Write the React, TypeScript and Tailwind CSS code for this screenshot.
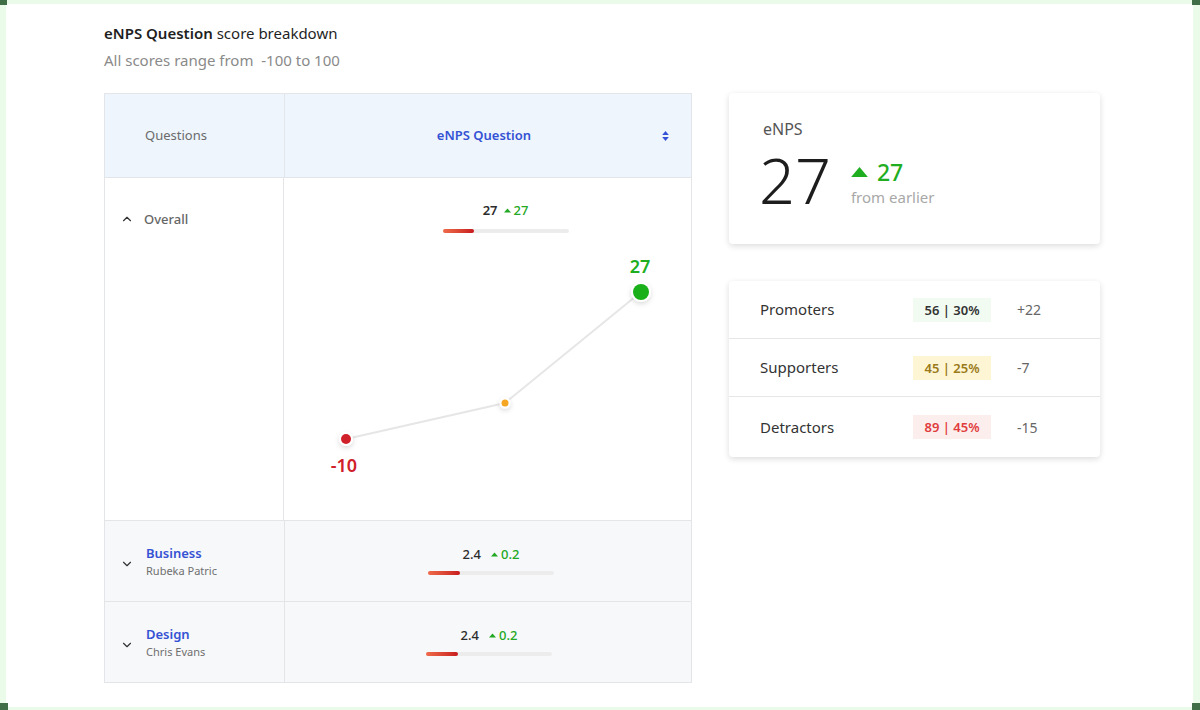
import { ChevronDown, ChevronUp } from 'lucide-react';

const font = { fontFamily: '"Noto Sans", "Open Sans", sans-serif' };

function UpTri({ className = '' }: { className?: string }) {
  return (
    <svg viewBox="0 0 10 6" className={className}>
      <path d="M5 0 L10 6 L0 6 Z" fill="currentColor" />
    </svg>
  );
}

function ScoreBar({ fill }: { fill: number }) {
  return (
    <div className="h-[4px] w-[126px] rounded-full bg-[#ececec]">
      <div
        className="h-full rounded-full bg-gradient-to-r from-[#ef6a4a] to-[#c8161e]"
        style={{ width: `${fill}%` }}
      />
    </div>
  );
}

function Score({ value, delta, big }: { value: string; delta: string; big?: boolean }) {
  return (
    <div className={`flex items-center text-[13px] leading-none ${big ? 'gap-[6px]' : 'gap-[10px]'}`}>
      <span className={`text-[#2b2b2b] ${big ? 'font-semibold' : 'font-medium'}`}>{value}</span>
      <span className="flex items-center gap-[3px] font-medium text-[#22a822]">
        <UpTri className="w-[7px] h-[5px]" />
        {delta}
      </span>
    </div>
  );
}

function Chart() {
  return (
    <svg width="407" height="270" className="block">
      <defs>
        <filter id="sh" x="-100%" y="-100%" width="300%" height="300%">
          <feDropShadow dx="0" dy="2" stdDeviation="2.5" floodColor="#000" floodOpacity="0.15" />
        </filter>
      </defs>
      <polyline points="62,200 221,164 357,53" fill="none" stroke="#e6e6e6" strokeWidth="2" />
      <circle cx="62" cy="200" r="7" fill="#fff" filter="url(#sh)" />
      <circle cx="62" cy="200" r="5" fill="#d0202a" />
      <circle cx="221" cy="164" r="5.5" fill="#fff" filter="url(#sh)" />
      <circle cx="221" cy="164" r="3.5" fill="#f5a623" />
      <circle cx="357" cy="53" r="10" fill="#fff" filter="url(#sh)" />
      <circle cx="357" cy="53" r="8" fill="#19b019" />
      <text x="356" y="34" textAnchor="middle" fontSize="18" fontWeight="600" fill="#1fae1f" style={font}>
        27
      </text>
      <text x="60" y="233" textAnchor="middle" fontSize="18" fontWeight="600" fill="#d0202a" style={font}>
        -10
      </text>
    </svg>
  );
}

function GroupRow({ name, owner, shift }: { name: string; owner: string; shift: string }) {
  return (
    <div className="flex h-[81px] border-t border-[#e3e5e8] bg-[#f7f8fa]">
      <div className="flex w-[180px] items-center gap-[12px] border-r border-[#e3e5e8] pl-[15px]">
        <ChevronDown size={14} strokeWidth={2} className="text-[#333] mt-[6px]" />
        <div className="flex flex-col gap-[5px]">
          <span className="text-[13px] font-semibold leading-none text-[#3552d4]">{name}</span>
          <span className="text-[11px] leading-none text-[#6f6f6f]">{owner}</span>
        </div>
      </div>
      <div className="flex flex-1 flex-col items-center justify-center gap-[10px]">
        <div className={`flex flex-col items-center gap-[10px] ${shift}`}>
          <Score value="2.4" delta="0.2" />
          <ScoreBar fill={25} />
        </div>
      </div>
    </div>
  );
}

function Breakdown({
  label,
  badge,
  badgeCls,
  delta,
}: {
  label: string;
  badge: string;
  badgeCls: string;
  delta: string;
}) {
  return (
    <div className="flex h-[58px] items-center border-b border-[#e6e6e6] last:h-[60px] last:border-b-0 pl-[31px]">
      <span className="w-[153px] text-[15px] text-[#333]">{label}</span>
      <span className={`w-[78px] py-[3px] text-center text-[13px] font-semibold leading-[18px] ${badgeCls}`}>
        {badge}
      </span>
      <span className="ml-[26px] text-[14px] text-[#666]">{delta}</span>
    </div>
  );
}

export default function App() {
  return (
    <div
      className="relative h-[710px] w-[1200px] border-[#eafbe9] border-t-[4px] border-l-[6px] border-r-[7px] border-b-[3px] bg-white"
      style={font}
    >
      {/* frame corners */}
      <div className="absolute -left-[6px] -top-[4px] h-[5px] w-[7px] bg-[#3f6e47]" />
      <div className="absolute -right-[7px] -top-[4px] h-[5px] w-[8px] bg-[#3f6e47]" />
      <div className="absolute -left-[6px] -bottom-[3px] h-[7px] w-[8px] bg-[#3f6e47]" />
      <div className="absolute -right-[7px] -bottom-[3px] h-[7px] w-[8px] bg-[#3f6e47]" />

      <div className="pl-[98px] pt-[20px]">
        <h1 className="text-[15px] leading-[18px] text-[#1f1f1f]">
          <span className="font-semibold">eNPS Question</span> score breakdown
        </h1>
        <p className="mt-[9px] text-[15px] leading-[18px] text-[#8a8a8a]">All scores range from&nbsp; -100 to 100</p>

        <div className="mt-[24px] flex gap-[37px]">
          {/* table */}
          <div className="w-[588px] border border-[#e3e5e8]">
            <div className="flex h-[83px] bg-[#eef5fd]">
              <div className="flex w-[180px] items-center border-r border-[#e3e5e8] pl-[40px] text-[13px] text-[#6b6b6b]">
                Questions
              </div>
              <div className="relative flex flex-1 items-center justify-center pr-[8px] text-[13px] font-semibold text-[#3552d4]">
                eNPS Question
                <div className="absolute right-[22px] top-1/2 -translate-y-1/2 flex flex-col gap-[2px]">
                  <UpTri className="w-[7px] h-[4px]" />
                  <UpTri className="w-[7px] h-[4px] rotate-180" />
                </div>
              </div>
            </div>

            <div className="flex h-[343px] border-t border-[#e3e5e8]">
              <div className="flex w-[180px] items-start gap-[10px] border-r border-[#e3e5e8] pl-[15px] pt-[34px]">
                <ChevronUp size={14} strokeWidth={2} className="text-[#333]" />
                <span className="text-[13px] font-medium leading-[14px] text-[#666]">Overall</span>
              </div>
              <div className="flex flex-1 flex-col items-center pt-[26px]">
                <div className="ml-[36px] flex flex-col items-center gap-[12px]">
                  <Score value="27" delta="27" big />
                  <ScoreBar fill={25} />
                </div>
                <div className="mt-[6px]">
                  <Chart />
                </div>
              </div>
            </div>

            <GroupRow name="Business" owner="Rubeka Patric" shift="ml-[6px]" />
            <GroupRow name="Design" owner="Chris Evans" shift="ml-[2px]" />
          </div>

          {/* right column */}
          <div className="flex w-[371px] flex-col gap-[37px]">
            <div className="h-[151px] rounded-[4px] bg-white px-[30px] pt-[26px] shadow-[0_2px_6px_rgba(0,0,0,0.14)]">
              <div className="pl-[4px] text-[16px] leading-[20px] text-[#555]">eNPS</div>
              <div className="mt-[9px] flex items-center gap-[20px]">
                <span className="text-[63px] font-light leading-[64px] text-[#1d1d1d]">27</span>
                <div className="flex flex-col pt-[6px]">
                  <span className="flex items-center gap-[9px] text-[23px] font-medium leading-[26px] text-[#1fae1f]">
                    <UpTri className="w-[17px] h-[10px]" />
                    27
                  </span>
                  <span className="mt-[2px] text-[15px] leading-[20px] text-[#a8a8a8]">from earlier</span>
                </div>
              </div>
            </div>

            <div className="rounded-[4px] bg-white shadow-[0_2px_6px_rgba(0,0,0,0.14)]">
              <Breakdown label="Promoters" badge="56  | 30%" badgeCls="bg-[#f2fbf2] text-[#333]" delta="+22" />
              <Breakdown label="Supporters" badge="45 | 25%" badgeCls="bg-[#fdf5d3] text-[#9a7a1a]" delta="-7" />
              <Breakdown label="Detractors" badge="89 | 45%" badgeCls="bg-[#fdeeee] text-[#e03c3c]" delta="-15" />
            </div>
          </div>
        </div>
      </div>
    </div>
  );
}
